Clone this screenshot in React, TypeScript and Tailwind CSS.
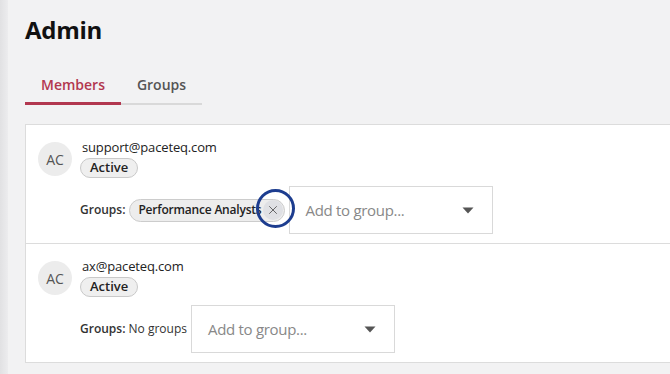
import { X } from 'lucide-react';

const members = [
  { initials: "AC", email: "support@paceteq.com", groups: ["Performance Analysts"] },
  { initials: "AC", email: "ax@paceteq.com", groups: [] as string[] },
];

const Caret = () => (
  <svg width="12" height="7" viewBox="0 0 12 7" className="shrink-0">
    <path d="M0.5 0.5 L11.5 0.5 L6 6.5 Z" fill="#555555" />
  </svg>
);

const GroupSelect = () => (
  <div className="flex h-[48px] w-[204px] shrink-0 items-center justify-between border border-[#d9d9d9] bg-white pl-[16px] pr-[18px]">
    <span className="text-[15px] tracking-[-0.3px] text-[#888]">Add to group...</span>
    <Caret />
  </div>
);

export default function App() {
  return (
    <div
      className="flex h-[374px] w-[670px] overflow-hidden bg-[#f2f2f3] text-[#222]"
      style={{ fontFamily: '"Open Sans", "Noto Sans", sans-serif' }}
    >
      {/* left edge strip */}
      <div className="w-[8px] shrink-0 bg-gradient-to-r from-[#e1e1e3] to-[#ececee]"></div>

      <div className="flex shrink-0 flex-col pl-[17px] pt-[14px]">
        <h1 className="text-[24px] leading-[32px] font-bold tracking-[-0.3px] text-[#111]">Admin</h1>

        {/* Tabs */}
        <div className="mt-[25px] flex items-end">
          <div className="flex h-[34px] w-[96px] items-start justify-center border-b-[3px] border-[#b2374f] pt-[3px] text-[14px] font-semibold text-[#b2374f]">
            Members
          </div>
          <div className="flex h-[33px] w-[81px] items-start justify-center border-b-2 border-[#d9d9d9] pt-[2px] text-[14px] font-semibold text-[#555]">
            Groups
          </div>
        </div>

        {/* Members card */}
        <div className="mt-[19px] w-[660px] border-t border-l border-[#dcdcdc] bg-white">
          {members.map((m, i) => (
            <div key={i} className="flex gap-[8px] border-b border-[#dcdcdc] pl-[12px] pt-[13px] pb-[9px]">
              <div className="mt-[4px] flex h-[34px] w-[34px] shrink-0 items-center justify-center rounded-full bg-[#ececec] text-[14px] text-[#555]">
                {m.initials}
              </div>
              <div className="flex flex-col">
                <div className="pl-[2px] text-[13px] leading-[18px] tracking-[-0.15px] text-[#222]">{m.email}</div>
                <div className="mt-[2px] flex h-[20px] w-fit items-center rounded-full border border-[#c9c9c9] bg-[#efefef] px-[9px] text-[13px] font-semibold text-[#222]">
                  Active
                </div>
                <div className="mt-[8px] flex items-center gap-[4px]">
                  <span className="text-[12px] text-[#333]">
                    <span className="font-semibold">Groups:</span>
                    {m.groups.length === 0 && <span> No groups</span>}
                  </span>
                  {m.groups.map((g) => (
                    <div
                      key={g}
                      className="flex h-[23px] items-center gap-[1px] rounded-full border border-[#cccccc] bg-[#ededed] pl-[8px] pr-[1px] text-[12px] font-semibold tracking-[-0.2px] text-[#222]"
                    >
                      <span>{g}</span>
                      <span className="relative flex h-[20px] w-[20px] items-center justify-center rounded-full bg-[#dfe0e4] text-[#555]">
                        <X size={14} strokeWidth={1.5} />
                        {/* highlight ring */}
                        <span className="absolute top-[-11px] left-[-7px] h-[39px] w-[39px] rounded-full border-[3px] border-[#1d3d8f]"></span>
                      </span>
                    </div>
                  ))}
                  <GroupSelect />
                </div>
              </div>
            </div>
          ))}
        </div>
      </div>
    </div>
  );
}
